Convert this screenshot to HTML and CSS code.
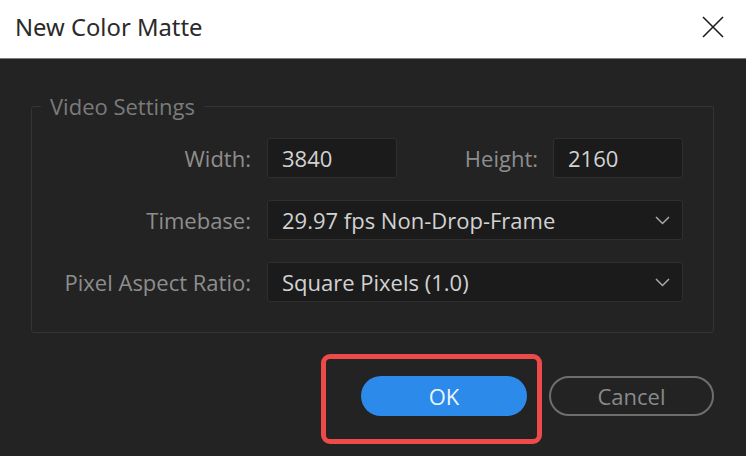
FILE: index.html
```html
<!DOCTYPE html>
<html>
<head>
<meta charset="utf-8">
<link rel="stylesheet" href="styles.css">
</head>
<body>
<div class="dialog">
  <div class="titlebar">
    <span class="title">New Color Matte</span>
    <svg class="close" width="24" height="24" viewBox="0 0 24 24"><path d="M2 2 L22 22 M22 2 L2 22" stroke="#1e1e1e" stroke-width="1.6" fill="none"/></svg>
  </div>
  <div class="content">
    <fieldset class="group">
      <legend class="legend">Video Settings</legend>
      <div class="grid">
        <div class="label">Width:</div>
        <div class="pair">
          <div class="field small">3840</div>
          <div class="label inner">Height:</div>
          <div class="field small">2160</div>
        </div>
        <div class="label">Timebase:</div>
        <div class="field select">
          <span>29.97 fps Non-Drop-Frame</span>
          <svg class="chev" width="15" height="9" viewBox="0 0 15 9"><path d="M1 1 L7.5 7.5 L14 1" stroke="#a8a8a8" stroke-width="1.5" fill="none"/></svg>
        </div>
        <div class="label">Pixel Aspect Ratio:</div>
        <div class="field select">
          <span>Square Pixels (1.0)</span>
          <svg class="chev" width="15" height="9" viewBox="0 0 15 9"><path d="M1 1 L7.5 7.5 L14 1" stroke="#a8a8a8" stroke-width="1.5" fill="none"/></svg>
        </div>
      </div>
    </fieldset>
    <div class="buttons">
      <button class="btn ok">OK</button>
      <button class="btn cancel">Cancel</button>
    </div>
    <div class="highlight"></div>
  </div>
</div>
</body>
</html>
```
FILE: styles.css
```css
html, body {
  margin: 0;
  padding: 0;
  background: #232323;
}
.dialog {
  width: 746px;
  height: 456px;
  display: flex;
  flex-direction: column;
  font-family: "Open Sans", "Noto Sans", sans-serif;
}
.titlebar {
  height: 58px;
  background: #ffffff;
  border-bottom: 1px solid #7d7d7d;
  display: flex;
  align-items: center;
  justify-content: space-between;
  padding: 0 21px 0 15px;
  box-sizing: content-box;
}
.title {
  font-family: "Noto Sans", "Open Sans", sans-serif;
  font-size: 23.8px;
  color: #2a2a2a;
  margin-top: -4px;
}
.close {
  margin-top: -4px;
}
.content {
  flex: 1;
  position: relative;
  background: #232323;
  padding: 35px 32px 0 31px;
}
.group {
  margin: 0;
  border: 1px solid #343434;
  border-radius: 3px;
  padding: 20px 30px 30px 0;
  min-width: 0;
}
.legend {
  margin-left: 9px;
  padding: 0 9px;
  font-size: 22px;
  line-height: 24px;
  color: #7b7b7b;
}
.grid {
  display: grid;
  grid-template-columns: 219px 1fr;
  column-gap: 16px;
  row-gap: 22px;
}
.label {
  font-size: 22px;
  color: #8e8e8e;
  text-align: right;
  line-height: 40px;
  white-space: nowrap;
}
.pair {
  display: flex;
  align-items: center;
}
.label.inner {
  flex: 1;
  padding-right: 15px;
}
.field {
  height: 40px;
  box-sizing: border-box;
  background: #1b1b1b;
  border: 1px solid #2f2f2f;
  border-radius: 3px;
  color: #d2d2d2;
  font-size: 22px;
  line-height: 38px;
  padding-left: 14px;
}
.field.small {
  width: 130px;
}
.field.select {
  display: flex;
  align-items: center;
  justify-content: space-between;
  padding-right: 12px;
}
.chev {
  display: block;
}
.buttons {
  display: flex;
  justify-content: flex-end;
  gap: 22px;
  margin-top: 43px;
}
.btn {
  width: 166px;
  height: 40px;
  border-radius: 20px;
  font-family: "Open Sans", "Noto Sans", sans-serif;
  font-size: 22px;
  padding: 0;
  box-sizing: border-box;
}
.ok {
  background: #2b8aea;
  border: none;
  color: #eef5fd;
}
.cancel {
  width: 165px;
  background: transparent;
  border: 2px solid #6e6e6e;
  color: #8a8a8a;
}
.highlight {
  position: absolute;
  left: 321px;
  top: 295px;
  width: 221px;
  height: 90px;
  box-sizing: border-box;
  border: 5px solid #ef4a4a;
  border-radius: 9px;
}
```
